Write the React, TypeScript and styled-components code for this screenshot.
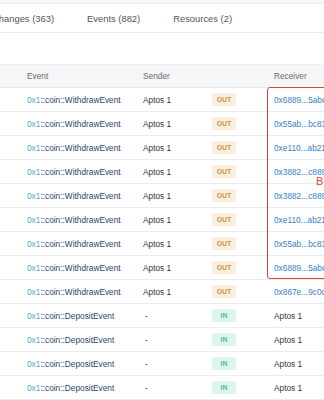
import React from 'react';
import styled, { createGlobalStyle } from 'styled-components';

const GlobalStyle = createGlobalStyle`
  html, body {
    margin: 0;
    padding: 0;
    background: #ffffff;
    overflow: hidden;
  }
  body {
    font-family: 'Liberation Sans', Arial, Helvetica, sans-serif;
  }
`;

type Dir = 'out' | 'in';

interface EventRow {
  kind: string;
  sender: string;
  dir: Dir;
  receiver: string;
  isAddress: boolean;
}

const withdraw = (receiver: string, isAddress = true): EventRow => ({
  kind: 'WithdrawEvent',
  sender: 'Aptos 1',
  dir: 'out',
  receiver,
  isAddress,
});

const deposit = (): EventRow => ({
  kind: 'DepositEvent',
  sender: '-',
  dir: 'in',
  receiver: 'Aptos 1',
  isAddress: false,
});

const rows: EventRow[] = [
  withdraw('0x6889...5abe'),
  withdraw('0x55ab...bc81'),
  withdraw('0xe110...ab21'),
  withdraw('0x3882...c889'),
  withdraw('0x3882...c889'),
  withdraw('0xe110...ab21'),
  withdraw('0x55ab...bc81'),
  withdraw('0x6889...5abe'),
  withdraw('0x867e...9c0c'),
  deposit(),
  deposit(),
  deposit(),
  deposit(),
];

const tabs = ['Changes (363)', 'Events (882)', 'Resources (2)'];

const Page = styled.div`
  width: 324px;
  height: 400px;
  overflow: hidden;
  position: relative;
  background: #fff;
`;

const TopStrip = styled.div`
  height: 3px;
  background: #f6f6f6;
  border-bottom: 1px solid #ececec;
`;

const TabBar = styled.div`
  display: flex;
  gap: 33px;
  height: 28px;
  align-items: center;
  margin-left: -8px;
  border-bottom: 1px solid #ececec;
`;

const Tab = styled.div`
  font-size: 9.4px;
  color: #555;
  white-space: nowrap;
`;

const Table = styled.div`
  margin-top: 31px;
  position: relative;
`;

const Grid = styled.div`
  display: grid;
  grid-template-columns: 27px 116px 69px 62px 1fr;
  align-items: center;
  font-size: 8.3px;
  white-space: nowrap;
`;

const HeaderRow = styled(Grid)`
  height: 22px;
  background: #f5f6f7;
  border-top: 1px solid #efefef;
  border-bottom: 1px solid #e9e9e9;
  color: #6b6b6b;
`;

const Row = styled(Grid)`
  height: 23px;
  border-bottom: 1px solid #ececec;
  color: #333;
`;

const Cell = styled.div<{ $pad?: number }>`
  padding-left: ${(p) => p.$pad ?? 0}px;
  overflow: hidden;
`;

const Module = styled.span`
  color: #5a9fd4;
`;

const EventName = styled.span`
  color: #2e4660;
`;

const Address = styled.span`
  color: #3b82c4;
`;

const Badge = styled.span<{ $dir: Dir }>`
  display: inline-flex;
  align-items: center;
  justify-content: center;
  width: 24px;
  height: 13px;
  border-radius: 2px;
  font-size: 6.8px;
  font-weight: bold;
  background: ${(p) => (p.$dir === 'out' ? '#fbefdc' : '#def4ee')};
  color: ${(p) => (p.$dir === 'out' ? '#c39546' : '#5bb39b')};
`;

const Highlight = styled.div`
  position: absolute;
  left: 267px;
  top: 23px;
  width: 80px;
  height: 192px;
  border: 1.5px solid #d2473a;
  border-radius: 3px;
  box-sizing: border-box;
  pointer-events: none;
`;

const HighlightLabel = styled.div`
  position: absolute;
  left: 316px;
  top: 111px;
  font-size: 11px;
  color: #d2473a;
`;

export default function App() {
  return (
    <Page>
      <GlobalStyle />
      <TopStrip />
      <TabBar>
        {tabs.map((t) => (
          <Tab key={t}>{t}</Tab>
        ))}
      </TabBar>
      <Table>
        <HeaderRow>
          <Cell />
          <Cell>Event</Cell>
          <Cell>Sender</Cell>
          <Cell />
          <Cell>Receiver</Cell>
        </HeaderRow>
        {rows.map((r, i) => (
          <Row key={i}>
            <Cell />
            <Cell>
              <Module>0x1</Module>
              <EventName>::coin::{r.kind}</EventName>
            </Cell>
            <Cell $pad={r.sender === '-' ? 2 : 0}>{r.sender}</Cell>
            <Cell>
              <Badge $dir={r.dir}>{r.dir === 'out' ? 'OUT' : 'IN'}</Badge>
            </Cell>
            <Cell>{r.isAddress ? <Address>{r.receiver}</Address> : r.receiver}</Cell>
          </Row>
        ))}
        <Highlight />
        <HighlightLabel>B</HighlightLabel>
      </Table>
    </Page>
  );
}
